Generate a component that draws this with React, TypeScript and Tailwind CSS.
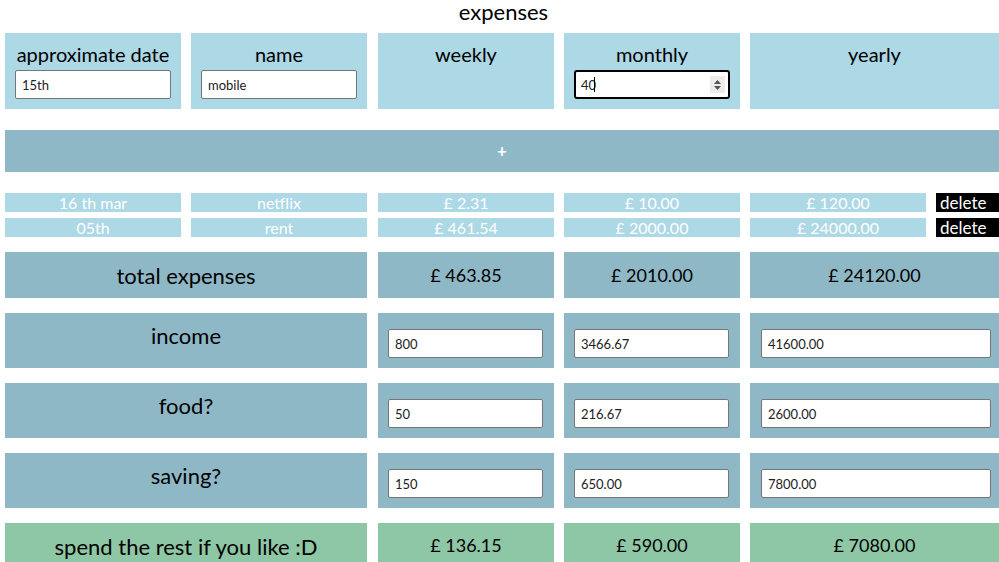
import { useState } from 'react'

type Expense = { date: string; name: string; weekly: string; monthly: string; yearly: string }

const expenses: Expense[] = [
  { date: '16 th mar', name: 'netflix', weekly: '£ 2.31', monthly: '£ 10.00', yearly: '£ 120.00' },
  { date: '05th', name: 'rent', weekly: '£ 461.54', monthly: '£ 2000.00', yearly: '£ 24000.00' },
]

const budget = [
  { label: 'income', weekly: '800', monthly: '3466.67', yearly: '41600.00' },
  { label: 'food?', weekly: '50', monthly: '216.67', yearly: '2600.00' },
  { label: 'saving?', weekly: '150', monthly: '650.00', yearly: '7800.00' },
]

const inputCls =
  'w-full h-[29px] bg-white border border-[#767676] rounded-[2px] px-[6px] text-[13px] text-[#222] outline-none'

export default function App() {
  const [date, setDate] = useState('15th')
  const [name, setName] = useState('mobile')
  const [monthly, setMonthly] = useState('40')

  return (
    <div className="w-[999px] h-[562px] overflow-hidden bg-white text-black font-['Lato','Open_Sans',sans-serif]">
      <h1 className="h-[33px] pt-[1px] text-center text-[22px] leading-[22px] pl-[8px]">expenses</h1>

      {/* new expense form */}
      <div className="flex gap-[10px] pl-[5px]">
        <div className="w-[176px] h-[76px] bg-[#add8e6] flex flex-col items-center pt-[8px] px-[10px]">
          <span className="text-[20px] leading-[26px]">approximate date</span>
          <input className={inputCls + ' mt-[3px]'} value={date} onChange={e => setDate(e.target.value)} />
        </div>
        <div className="w-[176px] h-[76px] bg-[#add8e6] flex flex-col items-center pt-[8px] px-[10px]">
          <span className="text-[20px] leading-[26px]">name</span>
          <input className={inputCls + ' mt-[3px]'} value={name} onChange={e => setName(e.target.value)} />
        </div>
        <div className="w-[176px] h-[76px] bg-[#add8e6] flex flex-col items-center pt-[8px] ml-px">
          <span className="text-[20px] leading-[26px]">weekly</span>
        </div>
        <div className="w-[176px] h-[76px] bg-[#add8e6] flex flex-col items-center pt-[8px] px-[10px]">
          <span className="text-[20px] leading-[26px]">monthly</span>
          <div className="relative w-full mt-[3px]">
            <input
              className="w-full h-[29px] bg-white border-2 border-black rounded-[3px] px-[5px] text-[13px] text-[#222] outline-none"
              value={monthly}
              onChange={e => setMonthly(e.target.value)}
            />
            <span className="absolute left-[20px] top-[7px] w-px h-[15px] bg-black" />
            <span className="absolute right-[5px] top-[6px] w-[15px] h-[17px] bg-[#ececec] flex flex-col items-center justify-center gap-[2px]">
              <svg width="7" height="4" viewBox="0 0 7 4"><path d="M0 4L3.5 0L7 4Z" fill="#555" /></svg>
              <svg width="7" height="4" viewBox="0 0 7 4"><path d="M0 0L3.5 4L7 0Z" fill="#555" /></svg>
            </span>
          </div>
        </div>
        <div className="flex-1 h-[76px] bg-[#add8e6] flex flex-col items-center pt-[8px]">
          <span className="text-[20px] leading-[26px]">yearly</span>
        </div>
      </div>

      <button className="mt-[21px] ml-[5px] w-[994px] h-[42px] bg-[#8fb8c6] text-white text-[17px] font-bold flex items-center justify-center">
        +
      </button>

      {/* expense list */}
      <div className="mt-[21px] flex flex-col gap-[6px]">
        {expenses.map(x => (
          <div key={x.name} className="flex gap-[10px] pl-[5px] text-[16px] leading-[19px] text-white">
            <div className="w-[176px] h-[19px] bg-[#add8e6] text-center">{x.date}</div>
            <div className="w-[176px] h-[19px] bg-[#add8e6] text-center">{x.name}</div>
            <div className="w-[176px] h-[19px] bg-[#add8e6] text-center ml-px">{x.weekly}</div>
            <div className="w-[176px] h-[19px] bg-[#add8e6] text-center">{x.monthly}</div>
            <div className="w-[176px] h-[19px] bg-[#add8e6] text-center">{x.yearly}</div>
            <button className="w-[63px] h-[19px] bg-black text-white text-left pl-[4px] text-[17px] leading-[19px]">delete</button>
          </div>
        ))}
      </div>

      {/* totals */}
      <div className="mt-[15px] flex gap-[10px] pl-[5px] text-[18px]">
        <div className="w-[362px] h-[46px] bg-[#8fb8c6] flex items-center justify-center text-[22px]">
          total expenses
        </div>
        <div className="w-[176px] h-[46px] bg-[#8fb8c6] flex items-center justify-center ml-px">£ 463.85</div>
        <div className="w-[176px] h-[46px] bg-[#8fb8c6] flex items-center justify-center">£ 2010.00</div>
        <div className="flex-1 h-[46px] bg-[#8fb8c6] flex items-center justify-center">£ 24120.00</div>
      </div>

      {budget.map(b => (
        <div key={b.label} className="mt-[15px] flex gap-[10px] pl-[5px]">
          <div className="w-[362px] h-[55px] bg-[#8fb8c6] text-center text-[22px] leading-[28px] pt-[9px]">
            {b.label}
          </div>
          <div className="w-[176px] h-[55px] bg-[#8fb8c6] pt-[16px] pl-[10px] pr-[11px] ml-px">
            <input className={inputCls} defaultValue={b.weekly} />
          </div>
          <div className="w-[176px] h-[55px] bg-[#8fb8c6] pt-[16px] pl-[10px] pr-[11px]">
            <input className={inputCls} defaultValue={b.monthly} />
          </div>
          <div className="flex-1 h-[55px] bg-[#8fb8c6] pt-[16px] pl-[11px] pr-[8px]">
            <input className={inputCls} defaultValue={b.yearly} />
          </div>
        </div>
      ))}

      {/* remainder */}
      <div className="mt-[15px] flex gap-[10px] pl-[5px] text-[18px]">
        <div className="w-[362px] h-[46px] bg-[#8ec7a5] text-center text-[22px] leading-[28px] pt-[10px]">
          spend the rest if you like :D
        </div>
        <div className="w-[176px] h-[46px] bg-[#8ec7a5] text-center leading-[26px] pt-[9px] ml-px">£ 136.15</div>
        <div className="w-[176px] h-[46px] bg-[#8ec7a5] text-center leading-[26px] pt-[9px]">£ 590.00</div>
        <div className="flex-1 h-[46px] bg-[#8ec7a5] text-center leading-[26px] pt-[9px]">£ 7080.00</div>
      </div>
    </div>
  )
}
